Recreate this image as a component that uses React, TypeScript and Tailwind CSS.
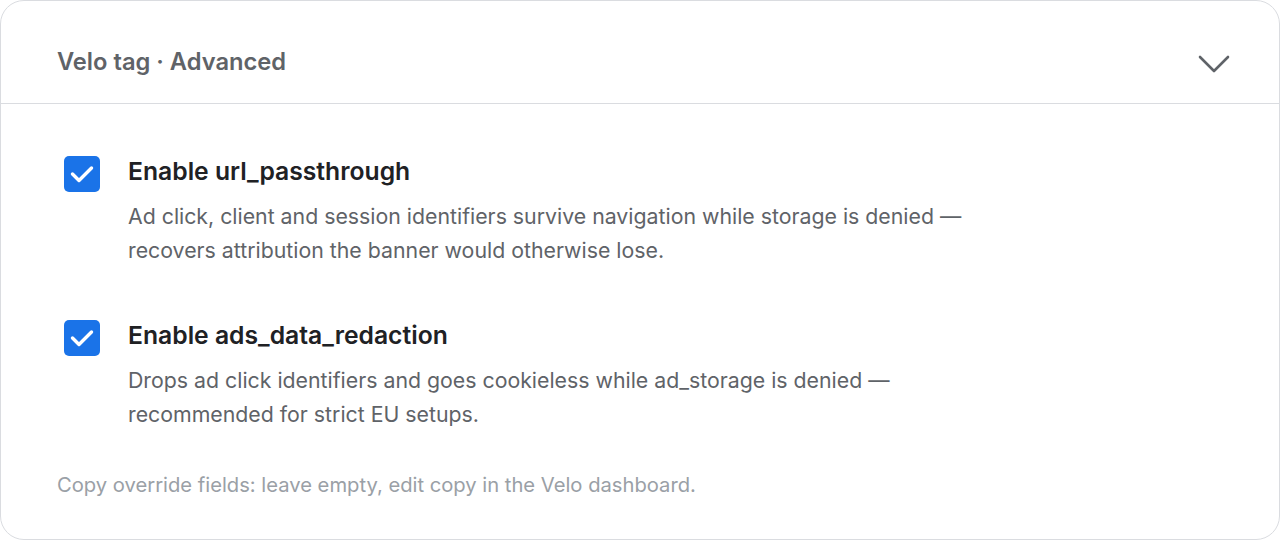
// App.tsx — advanced settings card for the Velo tag with two consent-mode toggles.

import { useState } from 'react'

interface OptionProps {
  label: string
  lines: string[]
  checked: boolean
  onToggle: () => void
}

function Checkbox({ checked, onToggle }: { checked: boolean; onToggle: () => void }) {
  return (
    <button
      onClick={onToggle}
      className={`mt-px w-9 h-9 shrink-0 rounded-[5px] flex items-center justify-center ${checked ? 'bg-[#1a73e8]' : 'border-2 border-[#5f6368] bg-white'}`}
    >
      {checked && (
        <svg width="36" height="36" viewBox="0 0 36 36" fill="none">
          <path d="M8.5 18l6.5 6.5L27.5 12" stroke="white" strokeWidth="3.4" strokeLinecap="round" strokeLinejoin="round" />
        </svg>
      )}
    </button>
  )
}

function Option({ label, lines, checked, onToggle }: OptionProps) {
  return (
    <div className="flex gap-7 pl-[7px]">
      <Checkbox checked={checked} onToggle={onToggle} />
      <div>
        <div className="text-[24.7px] leading-[32px] font-semibold text-[#202124]">{label}</div>
        <p className="mt-3 text-[21.3px] leading-[34px] text-[#5f6368]">
          {lines.map((l, i) => (
            <span key={i} className="block">{l}</span>
          ))}
        </p>
      </div>
    </div>
  )
}

export default function App() {
  const [urlPass, setUrlPass] = useState(true)
  const [redact, setRedact] = useState(true)

  return (
    <div className="w-[1280px] h-[540px] bg-white font-['Inter',_sans-serif]">
      <div className="h-full border border-[#dadce0] rounded-[24px] flex flex-col overflow-hidden">
        {/* Header */}
        <div className="h-[103px] shrink-0 flex items-center justify-between pt-5 pl-14 pr-12 border-b border-[#dadce0]">
          <h2 className="text-[23.7px] font-semibold text-[#5f6368]">Velo tag · Advanced</h2>
          <svg width="34" height="22" viewBox="0 0 34 22" fill="none" className="mt-1">
            <path d="M3 4l14 14L31 4" stroke="#5f6368" strokeWidth="2.6" strokeLinecap="round" strokeLinejoin="round" />
          </svg>
        </div>

        {/* Body */}
        <div className="px-14 pt-[51px] flex flex-col">
          <Option
            label="Enable url_passthrough"
            lines={[
              'Ad click, client and session identifiers survive navigation while storage is denied —',
              'recovers attribution the banner would otherwise lose.',
            ]}
            checked={urlPass}
            onToggle={() => setUrlPass(v => !v)}
          />
          <div className="h-[52px]" />
          <Option
            label="Enable ads_data_redaction"
            lines={[
              'Drops ad click identifiers and goes cookieless while ad_storage is denied —',
              'recommended for strict EU setups.',
            ]}
            checked={redact}
            onToggle={() => setRedact(v => !v)}
          />
          <p className="mt-10 text-[20.2px] leading-[28px] text-[#9aa0a6]">
            Copy override fields: leave empty, edit copy in the Velo dashboard.
          </p>
        </div>
      </div>
    </div>
  )
}
